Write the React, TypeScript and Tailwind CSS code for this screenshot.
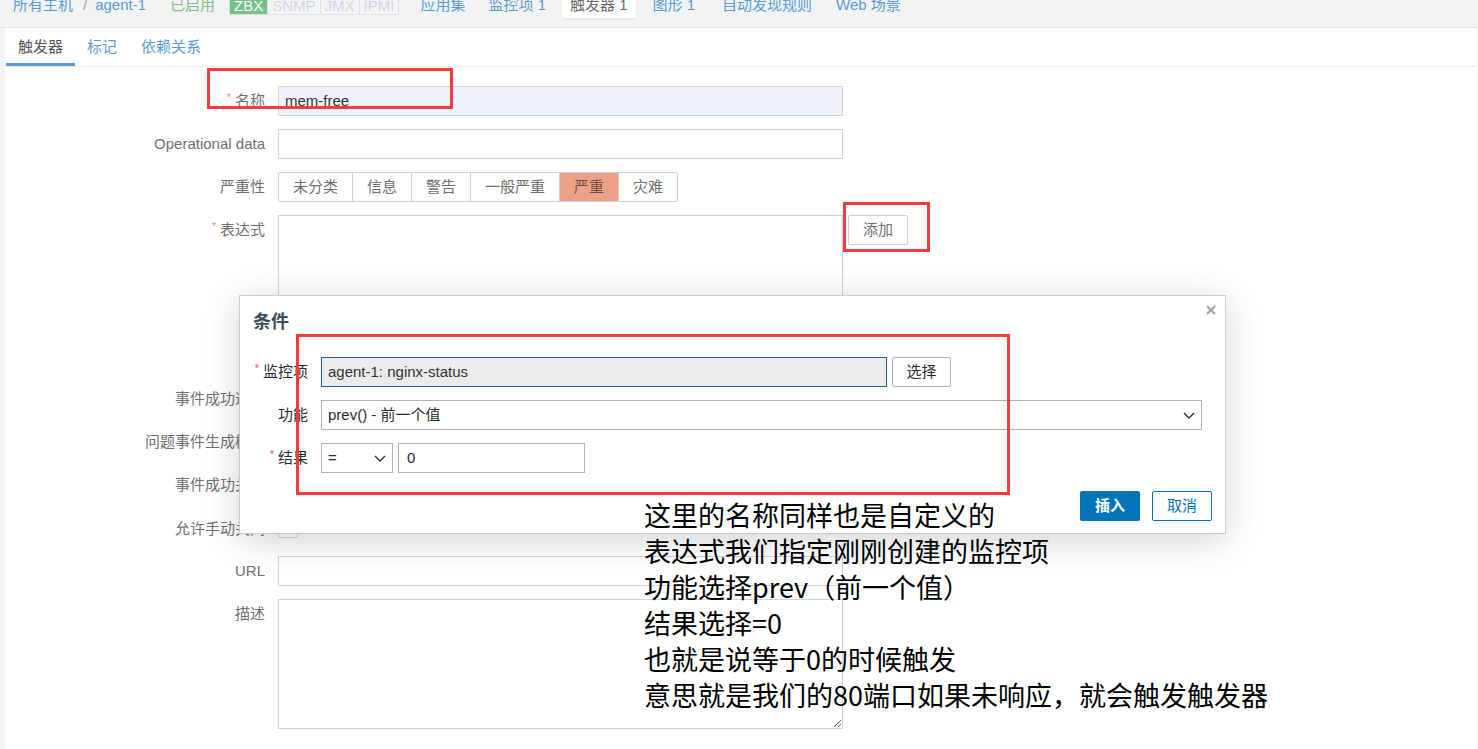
import type { ReactNode } from 'react'

const severities = [
  { label: '未分类', active: false },
  { label: '信息', active: false },
  { label: '警告', active: false },
  { label: '一般严重', active: false },
  { label: '严重', active: true },
  { label: '灾难', active: false },
]

const notes = [
  '这里的名称同样也是自定义的',
  '表达式我们指定刚刚创建的监控项',
  '功能选择prev（前一个值）',
  '结果选择=0',
  '也就是说等于0的时候触发',
  '意思就是我们的80端口如果未响应，就会触发触发器',
]

const Label = ({ children, req }: { children: ReactNode; req?: boolean }) => (
  <div className="w-[260px] shrink-0 text-right leading-[29px] whitespace-nowrap text-[#6f6f6f]">
    {req && <span className="mr-[4px] align-top text-[11px] leading-[22px] text-[#e98b7e]">*</span>}
    {children}
  </div>
)

const Segmented = ({ items }: { items: { label: string; active: boolean }[] }) => (
  <div className="flex h-[30px] rounded-[2px] border border-[#cad2d8]">
    {items.map((it, i) => (
      <div
        key={it.label}
        className={`flex items-center px-[14px] ${i > 0 ? 'border-l border-[#cad2d8]' : ''} ${
          it.active ? 'bg-[#eca18b] text-[#7b4a3e]' : 'text-[#6f6f6f]'
        }`}
      >
        {it.label}
      </div>
    ))}
  </div>
)

const Chevron = () => (
  <svg width="12" height="7" viewBox="0 0 12 7" fill="none" stroke="#2b2b2b" strokeWidth="1.3">
    <polyline points="1,1 6,6 11,1" />
  </svg>
)

const DLabel = ({ children, req }: { children: ReactNode; req?: boolean }) => (
  <div className="w-[55px] shrink-0 text-right leading-[29px] whitespace-nowrap text-[#1f2c33]">
    {req && <span className="mr-[4px] align-top text-[11px] leading-[22px] text-[#e45959]">*</span>}
    {children}
  </div>
)

export default function App() {
  return (
    <div className="relative h-[749px] w-[1478px] overflow-hidden bg-[#f2f3f5] font-['Liberation_Sans','Noto_Sans_CJK_SC',sans-serif] text-[15px]">
      {/* Host header / nav */}
      <div className="h-[28px] overflow-hidden border-b border-[#e2e4e6]">
        <div className="-mt-[5px] flex items-start whitespace-nowrap leading-[20px]">
          <span className="ml-[13px] text-[#5a9bd2]">所有主机</span>
          <span className="ml-[10px] text-[#9aa3a9]">/</span>
          <span className="ml-[8px] text-[#5a9bd2]">agent-1</span>
          <span className="ml-[24px] text-[#80bd83]">已启用</span>
          <div className="ml-[14px] flex h-[20px] rounded-[2px] border border-[#dde1e4]">
            <span className="bg-[#74c287] px-[4px] text-white">ZBX</span>
            <span className="border-l border-[#dde1e4] px-[4px] text-[#d2d6da]">SNMP</span>
            <span className="border-l border-[#dde1e4] px-[4px] text-[#d2d6da]">JMX</span>
            <span className="border-l border-[#dde1e4] px-[4px] text-[#d2d6da]">IPMI</span>
          </div>
          <span className="ml-[21px] text-[#5a9bd2]">应用集</span>
          <span className="ml-[23px] text-[#5a9bd2]">监控项 1</span>
          <span className="ml-[16px] h-[23px] bg-white px-[8px] text-[#6a6a6a] shadow-[0_1px_2px_rgba(0,0,0,0.08)]">触发器 1</span>
          <span className="ml-[17px] text-[#5a9bd2]">图形 1</span>
          <span className="ml-[27px] text-[#5a9bd2]">自动发现规则</span>
          <span className="ml-[24px] text-[#5a9bd2]">Web 场景</span>
        </div>
      </div>

      <div className="ml-[5px] mr-[1px] h-[721px] bg-white">
        {/* Tabs */}
        <div className="flex border-b border-[#ebebeb] leading-[20px]">
          <div className="ml-[1px] border-b-[3px] border-[#5b9cd0] px-[12px] pt-[9px] pb-[6px] text-[#555]">触发器</div>
          <div className="px-[12px] pt-[9px] pb-[9px] text-[#5a9bd2]">标记</div>
          <div className="px-[12px] pt-[9px] pb-[9px] text-[#5a9bd2]">依赖关系</div>
        </div>

        {/* Form */}
        <div className="flex flex-col gap-[13px] pt-[19px]">
          <div className="flex gap-[13px]">
            <Label req>名称</Label>
            <div className="flex h-[30px] w-[565px] items-center border border-[#cfd5da] bg-[#eef3fb] px-[6px] text-[#333]">mem-free</div>
          </div>
          <div className="flex gap-[13px]">
            <Label>Operational data</Label>
            <div className="h-[30px] w-[565px] border border-[#cfd5da]" />
          </div>
          <div className="flex gap-[13px]">
            <Label>严重性</Label>
            <Segmented items={severities} />
          </div>
          <div className="flex gap-[13px]">
            <Label req>表达式</Label>
            <div className="h-[113px] w-[565px] border border-[#cfd5da]" />
            <div className="-ml-[8px] flex h-[30px] items-center rounded-[2px] border border-[#cad2d8] px-[14px] text-[#6f6f6f]">添加</div>
          </div>
          <div className="flex gap-[13px]">
            <div className="w-[260px] shrink-0" />
            <div className="leading-[30px] text-[#5a9bd2]">表达式构造器</div>
          </div>
          <div className="flex gap-[13px]">
            <Label>事件成功迭代</Label>
            <Segmented items={[{ label: '表达式', active: true }, { label: '恢复表达式', active: false }, { label: '无', active: false }]} />
          </div>
          <div className="flex gap-[13px]">
            <Label>问题事件生成模式</Label>
            <Segmented items={[{ label: '单个', active: true }, { label: '多重', active: false }]} />
          </div>
          <div className="flex gap-[13px]">
            <Label>事件成功关闭</Label>
            <Segmented items={[{ label: '所有问题', active: true }, { label: '所有问题如果标签值匹配', active: false }]} />
          </div>
          <div className="flex h-[30px] items-center gap-[13px]">
            <Label>允许手动关闭</Label>
            <div className="h-[19px] w-[20px] rounded-[2px] border border-[#cad2d8]" />
          </div>
          <div className="flex gap-[13px]">
            <Label>URL</Label>
            <div className="h-[30px] w-[565px] border border-[#cfd5da]" />
          </div>
          <div className="flex gap-[13px]">
            <Label>描述</Label>
            <textarea readOnly className="h-[130px] w-[565px] border border-[#cfd5da] outline-none" />
          </div>
        </div>
      </div>

      {/* Condition dialog */}
      <div className="absolute left-[239px] top-[295px] h-[239px] w-[987px] border border-[#c5ccd2] bg-white shadow-[0_6px_32px_rgba(40,50,60,0.22)]">
        <svg className="absolute right-[9px] top-[9px]" width="10" height="10" viewBox="0 0 10 10" stroke="#a3abb0" strokeWidth="2.4">
          <line x1="1" y1="1" x2="9" y2="9" />
          <line x1="9" y1="1" x2="1" y2="9" />
        </svg>
        <div className="px-[13px] pt-[13px] text-[18px] font-bold leading-[26px] text-[#3a4c59]">条件</div>
        <div className="mt-[22px] flex flex-col gap-[13px] px-[13px]">
          <div className="flex gap-[13px]">
            <DLabel req>监控项</DLabel>
            <div className="flex h-[30px] w-[566px] items-center border border-[#1f5f9c] bg-[#ebebeb] px-[6px] text-[#333]">agent-1: nginx-status</div>
            <div className="-ml-[8px] flex h-[30px] w-[59px] items-center justify-center rounded-[2px] border border-[#a9b4bb] text-[#1f2c33]">选择</div>
          </div>
          <div className="flex gap-[13px]">
            <DLabel>功能</DLabel>
            <div className="flex h-[30px] w-[881px] items-center justify-between border border-[#a9b4bb] pl-[6px] pr-[6px] text-[#1f2c33]">
              <span>prev() - 前一个值</span>
              <Chevron />
            </div>
          </div>
          <div className="flex gap-[13px]">
            <DLabel req>结果</DLabel>
            <div className="flex h-[30px] w-[72px] items-center justify-between border border-[#a9b4bb] pl-[6px] pr-[6px] text-[#1f2c33]">
              <span>=</span>
              <Chevron />
            </div>
            <div className="-ml-[8px] flex h-[30px] w-[187px] items-center border border-[#a9b4bb] px-[8px] text-[#1f2c33]">0</div>
          </div>
        </div>
        <div className="mt-[18px] flex justify-end gap-[12px] px-[13px]">
          <div className="flex h-[30px] w-[60px] items-center justify-center rounded-[2px] bg-[#0275b8] font-bold text-white">插入</div>
          <div className="flex h-[30px] w-[60px] items-center justify-center rounded-[2px] border border-[#0275b8] text-[#0275b8]">取消</div>
        </div>
      </div>

      {/* Annotation boxes */}
      <div className="absolute left-[207px] top-[68px] h-[41px] w-[246px] border-[3px] border-[#f53b3b]" />
      <div className="absolute left-[843px] top-[202px] h-[50px] w-[87px] border-[3px] border-[#f53b3b]" />
      <div className="absolute left-[296px] top-[334px] h-[161px] w-[714px] border-[3px] border-[#f53b3b]" />

      {/* Annotation text */}
      <div className="absolute left-[644px] top-[497px] font-['Noto_Sans_CJK_SC',sans-serif] text-[27px] leading-[36px] whitespace-nowrap text-black">
        {notes.map((n) => (
          <div key={n}>{n}</div>
        ))}
      </div>
    </div>
  )
}
